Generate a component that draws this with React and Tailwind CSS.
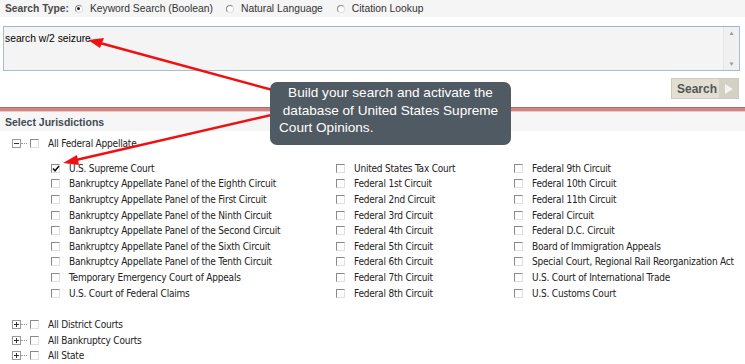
import React from "react";

const col1 = [
  ["U.S. Supreme Court", true],
  ["Bankruptcy Appellate Panel of the Eighth Circuit"],
  ["Bankruptcy Appellate Panel of the First Circuit"],
  ["Bankruptcy Appellate Panel of the Ninth Circuit"],
  ["Bankruptcy Appellate Panel of the Second Circuit"],
  ["Bankruptcy Appellate Panel of the Sixth Circuit"],
  ["Bankruptcy Appellate Panel of the Tenth Circuit"],
  ["Temporary Emergency Court of Appeals"],
  ["U.S. Court of Federal Claims"],
];
const col2 = [
  "United States Tax Court",
  "Federal 1st Circuit",
  "Federal 2nd Circuit",
  "Federal 3rd Circuit",
  "Federal 4th Circuit",
  "Federal 5th Circuit",
  "Federal 6th Circuit",
  "Federal 7th Circuit",
  "Federal 8th Circuit",
];
const col3 = [
  "Federal 9th Circuit",
  "Federal 10th Circuit",
  "Federal 11th Circuit",
  "Federal Circuit",
  "Federal D.C. Circuit",
  "Board of Immigration Appeals",
  "Special Court, Regional Rail Reorganization Act",
  "U.S. Court of International Trade",
  "U.S. Customs Court",
];

function Box({ checked }) {
  return (
    <span className="relative inline-block w-[9px] h-[9px] border border-t-[#8a8a8a] border-l-[#8a8a8a] border-r-[#e0e0e0] border-b-[#e0e0e0] bg-white shrink-0">
      {checked && (
        <svg className="absolute left-[0px] top-[0px]" width="8" height="8" viewBox="0 0 8 8">
          <path d="M1 3.5 L3 5.8 L7 1" stroke="#111" strokeWidth="1.5" fill="none" />
        </svg>
      )}
    </span>
  );
}

function Radio({ checked }) {
  return (
    <span className="relative inline-block w-[8px] h-[8px] rounded-full border border-t-[#888] border-l-[#888] border-r-[#ddd] border-b-[#ddd] bg-white">
      {checked && <span className="absolute left-[1.5px] top-[1.5px] w-[3px] h-[3px] rounded-full bg-[#222]" />}
    </span>
  );
}

function Item({ label, checked }) {
  return (
    <div className="flex items-center h-[15.6px]">
      <Box checked={checked} />
      <span className="ml-[9px] whitespace-nowrap">{label}</span>
    </div>
  );
}

function TreeIcon({ plus }) {
  return (
    <span className="flex items-center">
      <span className="relative inline-block w-[9px] h-[9px] border border-[#9a9a9a] bg-white">
        <span className="absolute left-[1px] top-[3px] w-[5px] h-[1px] bg-[#333]" />
        {plus && <span className="absolute left-[3px] top-[1px] w-[1px] h-[5px] bg-[#333]" />}
      </span>
      <span className="inline-block w-[6px] border-t border-dotted border-[#999]" />
    </span>
  );
}

function TreeRow({ label, plus }) {
  return (
    <div className="flex items-center h-[15.5px] pl-[12px]">
      <TreeIcon plus={plus} />
      <span className="ml-[3px] flex items-center"><Box /></span>
      <span className="ml-[9px] whitespace-nowrap">{label}</span>
    </div>
  );
}

export default function App() {
  return (
    <div
      className="relative w-[745px] h-[364px] overflow-hidden bg-white text-[10.3px] text-[#222]"
      style={{ fontFamily: '"Liberation Sans", Arial, sans-serif' }}
    >
      {/* Search type bar */}
      <div className="h-[17px] bg-[#f5f5f5] flex items-center pl-[5px] text-[#333]">
        <span className="font-bold text-[#4a4a4a]">Search Type:</span>
        <span className="ml-[6px] flex items-center"><Radio checked /></span>
        <span className="ml-[7px]">Keyword Search (Boolean)</span>
        <span className="ml-[13px] flex items-center"><Radio /></span>
        <span className="ml-[7px]">Natural Language</span>
        <span className="ml-[14px] flex items-center"><Radio /></span>
        <span className="ml-[7px]">Citation Lookup</span>
      </div>

      {/* Textarea */}
      <div className="pl-[3px] pr-[5px] pt-[9px]">
        <div className="h-[45px] border border-[#a8bdd2] border-t-[#9fb6cc] bg-[#f4f4f4] flex">
          <div className="flex-1 pl-[1px] pt-[4px] text-black">search w/2 seizure</div>
          <div className="w-[16px] bg-[#f0f0f0] border-l border-[#e6e6e6] flex flex-col items-center justify-between py-[3px] text-[#999] text-[6px] leading-none">
            <span>▲</span>
            <span>▼</span>
          </div>
        </div>
      </div>

      {/* Search button */}
      <div className="flex justify-end pr-[6px] pt-[7px]">
        <div className="h-[21px] w-[68px] flex border border-[#cfcbbd] bg-[#e2dfd2]">
          <div className="flex-1 flex items-center pl-[5px] font-bold text-[12px] text-[#555]">Search</div>
          <div className="w-[19px] bg-[#d3d0c4] flex items-center justify-center">
            <svg width="8" height="10" viewBox="0 0 8 10">
              <path d="M0 0 L8 5 L0 10 Z" fill="#f4f4f0" />
            </svg>
          </div>
        </div>
      </div>

      {/* Divider */}
      <div className="mt-[8px] h-[1px] bg-[#b86565]" />
      <div className="h-[3px] bg-[#d08585]" />
      <div className="h-[1px] bg-[#e9c9c9]" />

      {/* Select Jurisdictions header */}
      <div className="h-[19px] bg-[#f6f6f6] flex items-center pl-[5px] pt-[3px] font-bold text-[#3f4a55] text-[10.5px]">
        Select Jurisdictions
      </div>

      <div
        className="text-[10px] tracking-[-0.2px] text-[#222]"
        style={{ fontFamily: '"DejaVu Sans Condensed", "DejaVu Sans", Verdana, sans-serif' }}
      >
        <div className="pt-[5px]">
          <TreeRow label="All Federal Appellate" />
        </div>

        <div className="flex pt-[9px] pl-[51px]">
          <div className="w-[285px] shrink-0">
            {col1.map(([l, c]) => <Item key={l} label={l} checked={c} />)}
          </div>
          <div className="w-[178px] shrink-0">
            {col2.map((l) => <Item key={l} label={l} />)}
          </div>
          <div className="shrink-0">
            {col3.map((l) => <Item key={l} label={l} />)}
          </div>
        </div>

        <div className="pt-[16px]">
          <TreeRow label="All District Courts" plus />
          <TreeRow label="All Bankruptcy Courts" plus />
          <TreeRow label="All State" plus />
        </div>
      </div>

      {/* Arrows overlay */}
      <svg className="absolute left-0 top-0 pointer-events-none" width="745" height="364">
        <line x1="280" y1="92" x2="100" y2="43" stroke="#ee1111" strokeWidth="2.5" />
        <path d="M88 40 L104 38 L100 48 Z" fill="#ee1111" />
        <line x1="280" y1="113" x2="76" y2="160" stroke="#ee1111" strokeWidth="2.5" />
        <path d="M63 163 L77 155 L79 165 Z" fill="#ee1111" />
      </svg>

      {/* Tooltip */}
      <div className="absolute left-[270px] top-[82px] w-[241px] h-[63px] rounded-[7px] bg-[#505a63] text-white text-[13.6px] leading-[17.5px] text-center pt-[2px]">
        Build your search and activate the<br />
        database of United States Supreme<br />
        <span className="block text-left pl-[9px]">Court Opinions.</span>
      </div>
    </div>
  );
}
